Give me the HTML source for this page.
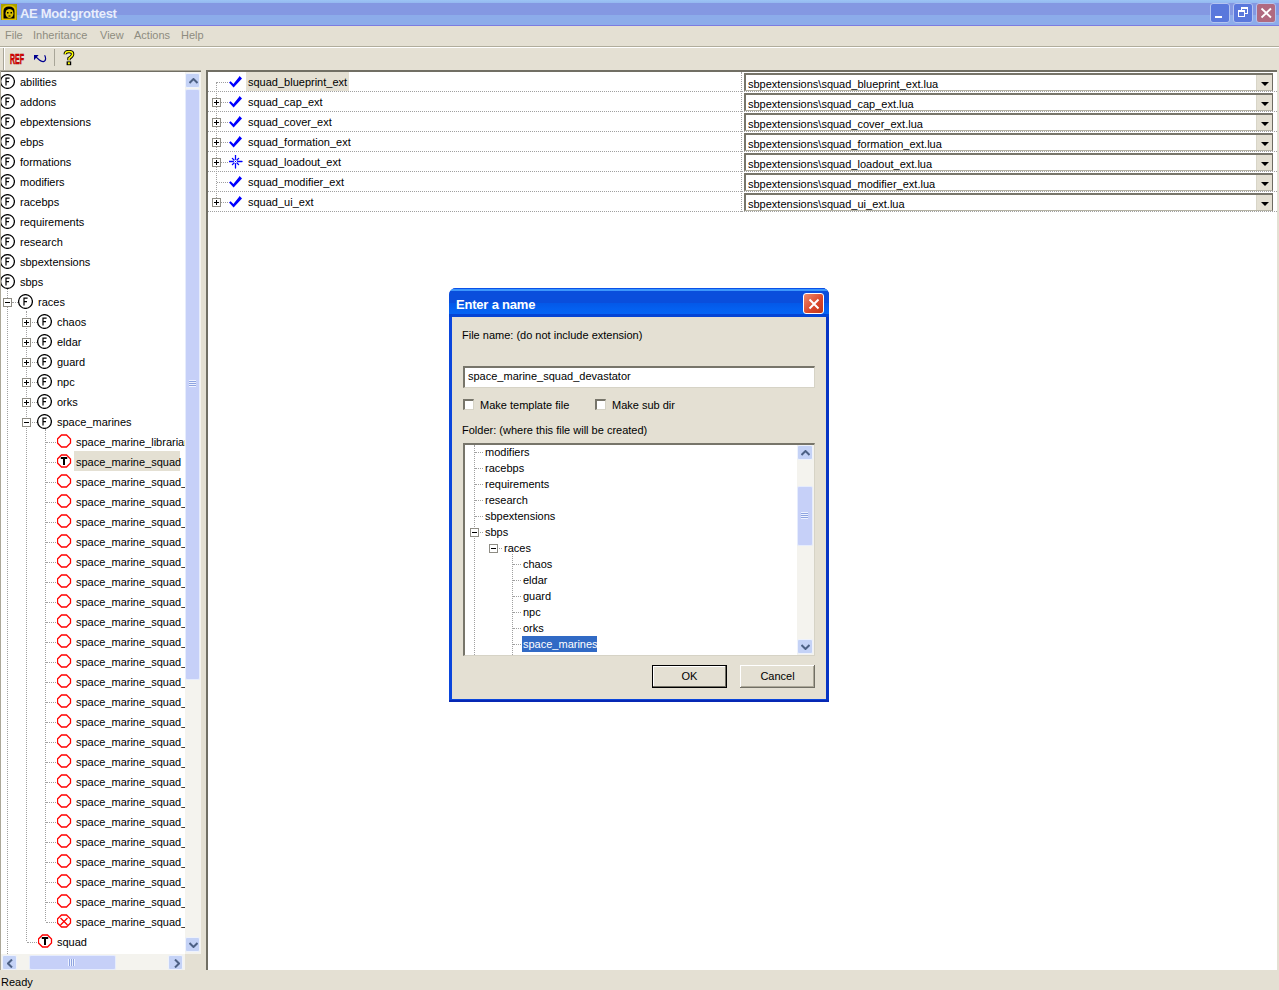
<!DOCTYPE html><html><head><meta charset="utf-8"><style>
*{margin:0;padding:0;box-sizing:border-box}
html,body{width:1279px;height:990px;overflow:hidden;background:#E4E0D3;font-family:"Liberation Sans", sans-serif;font-size:11px;color:#000}
.a{position:absolute}
.t{position:absolute;white-space:nowrap;line-height:13px;font-size:11px}
.dv{position:absolute;border-left:1px dotted #a0a0a0;width:0}
.dh{position:absolute;border-top:1px dotted #a0a0a0;height:0}
.pb{position:absolute;width:9px;height:9px;border:1px solid #8e8c84;background:#fff}
.pb:before{content:"";position:absolute;left:1px;top:3px;width:5px;height:1px;background:#000}
.pb.p:after{content:"";position:absolute;left:3px;top:1px;width:1px;height:5px;background:#000}
.fi{position:absolute;width:15px;height:15px;border:1px solid #000;border-radius:50%;background:#fff;font-size:10px;line-height:13px;text-align:center;}
.cmb{position:absolute;left:744px;width:529px;height:18px;background:#fff;border-top:2px solid #77756a;border-left:2px solid #77756a;border-right:1px solid #6e6c62;border-bottom:1px solid #b4b2a4}
.cmb .bt{position:absolute;right:0;top:0;width:16px;height:15px;background:#E4E0D3;border-left:1px solid #d8d5c8}
.cmb .bt:after{content:"";position:absolute;left:4px;top:7px;border-left:4px solid transparent;border-right:4px solid transparent;border-top:4px solid #000}
</style></head><body>
<div class="a" style="left:0;top:0;width:1279px;height:26px;background:linear-gradient(#9cc4f4 0px,#94b8f0 3px,#8498e2 3px,#8498e2 15px,#8cacea 15px,#8cacea 25px,#7c7ce0 25px)"></div>
<svg class="a" style="left:1px;top:4px" width="16" height="16"><rect x="0" y="0" width="16" height="16" fill="#a8a000"/><path d="M1 16 V6 Q1 1 8 1 Q15 1 15 6 V16 Z" fill="#e0c000"/><path d="M2.5 14.5 V7 Q2.5 2.5 8 2.5 Q13.5 2.5 13.5 7 V14.5 Z" fill="#000"/><ellipse cx="8.5" cy="9.5" rx="4" ry="4.5" fill="#d8c000"/><rect x="6" y="8" width="1.5" height="1.5" fill="#000"/><rect x="9.5" y="8" width="1.5" height="1.5" fill="#000"/><rect x="7.5" y="11.5" width="2" height="1" fill="#000"/></svg>
<div class="t" style="left:20px;top:6px;font-size:13px;line-height:16px;font-weight:bold;color:#e8eefc;letter-spacing:-0.3px">AE Mod:grottest</div>
<div class="a" style="left:1210px;top:3px;width:20px;height:20px;border:1px solid #b4c4f0;border-radius:3px;background:#5a78dc"><div class="a" style="left:4px;top:12px;width:7px;height:2px;background:#fff"></div></div>
<div class="a" style="left:1233px;top:3px;width:20px;height:20px;border:1px solid #b4c4f0;border-radius:3px;background:#5a78dc"><div class="a" style="left:7px;top:3px;width:7px;height:7px;border:1px solid #fff;border-top-width:2px"></div><div class="a" style="left:4px;top:6px;width:7px;height:7px;border:1px solid #fff;border-top-width:2px;background:#5a78dc"></div></div>
<div class="a" style="left:1256px;top:3px;width:20px;height:20px;border:1px solid #b4c4f0;border-radius:3px;background:#b06a80"><svg class="a" style="left:3px;top:3px" width="13" height="12"><path d="M1.5 1.5L11 10.5M11 1.5L1.5 10.5" stroke="#fff" stroke-width="1.8"/></svg></div>
<div class="t" style="left:5px;top:29px;color:#8e8c80">File</div>
<div class="t" style="left:33px;top:29px;color:#8e8c80">Inheritance</div>
<div class="t" style="left:100px;top:29px;color:#8e8c80">View</div>
<div class="t" style="left:134px;top:29px;color:#8e8c80">Actions</div>
<div class="t" style="left:181px;top:29px;color:#8e8c80">Help</div>
<div class="a" style="left:0;top:46px;width:1279px;height:1px;background:#b0ad9c"></div>
<div class="a" style="left:0;top:47px;width:1279px;height:1px;background:#fff"></div>
<div class="a" style="left:3px;top:48px;width:1px;height:22px;background:#a8a598"></div>
<div class="a" style="left:4px;top:48px;width:1px;height:22px;background:#fff"></div>
<svg class="a" style="left:9px;top:52px" width="17" height="14"><text x="1" y="11.9" font-family="Liberation Sans" font-weight="bold" font-size="14.5" fill="#f00000" stroke="#a00000" stroke-width="0.6" textLength="14" lengthAdjust="spacingAndGlyphs">REF</text></svg>
<svg class="a" style="left:33px;top:54px" width="14" height="10"><path d="M1 1 H5.6 L1 6.2 Z" fill="#000090"/><path d="M2.6 2.6 L6.4 6 Q8.4 7.8 10.4 7.6 Q12.6 7.2 12.6 4.8 Q12.6 2.8 11.6 1.2" stroke="#000090" stroke-width="1.2" fill="none"/></svg>
<div class="a" style="left:54px;top:49px;width:1px;height:17px;background:#a8a598"></div>
<svg class="a" style="left:63px;top:50px" width="12" height="16"><path d="M2.2 4.2 Q2.2 1.6 6 1.6 Q9.6 1.6 9.6 4.2 Q9.6 6 6 8.4 V10.2" stroke="#000" stroke-width="3.4" fill="none"/><rect x="3.6" y="11.4" width="4.6" height="3.8" fill="#000"/><path d="M2.2 4.2 Q2.2 1.6 6 1.6 Q9.6 1.6 9.6 4.2 Q9.6 6 6 8.4 V10.2" stroke="#ffff00" stroke-width="1.5" fill="none"/><rect x="4.9" y="12.3" width="2" height="2" fill="#ffff00"/></svg>
<div class="a" style="left:0;top:70px;width:201px;height:900px;background:#fff;border-top:1px solid #aca899;border-left:1px solid #aca899;overflow:hidden">
<div class="a" style="left:-1px;top:0px;width:201px;height:1px;background:#716f64"></div>
<div class="a" style="left:-1px;top:0px;width:1px;height:900px;background:#716f64"></div>
</div>
<div class="a" style="left:1px;top:72px;width:184px;height:882px;overflow:hidden">
<div class="dv" style="left:6px;top:217px;height:681px"></div>
<svg class="a" style="left:-1px;top:2px" width="15" height="15"><circle cx="7.5" cy="7.5" r="6.9" fill="#fff" stroke="#000" stroke-width="1.25"/><path d="M6 11.5 V4.2 H9.6 M6 7.6 H9" stroke="#000" stroke-width="1.2" fill="none"/></svg>
<div class="t" style="left:19px;top:4px;">abilities</div>
<svg class="a" style="left:-1px;top:22px" width="15" height="15"><circle cx="7.5" cy="7.5" r="6.9" fill="#fff" stroke="#000" stroke-width="1.25"/><path d="M6 11.5 V4.2 H9.6 M6 7.6 H9" stroke="#000" stroke-width="1.2" fill="none"/></svg>
<div class="t" style="left:19px;top:24px;">addons</div>
<svg class="a" style="left:-1px;top:42px" width="15" height="15"><circle cx="7.5" cy="7.5" r="6.9" fill="#fff" stroke="#000" stroke-width="1.25"/><path d="M6 11.5 V4.2 H9.6 M6 7.6 H9" stroke="#000" stroke-width="1.2" fill="none"/></svg>
<div class="t" style="left:19px;top:44px;">ebpextensions</div>
<svg class="a" style="left:-1px;top:62px" width="15" height="15"><circle cx="7.5" cy="7.5" r="6.9" fill="#fff" stroke="#000" stroke-width="1.25"/><path d="M6 11.5 V4.2 H9.6 M6 7.6 H9" stroke="#000" stroke-width="1.2" fill="none"/></svg>
<div class="t" style="left:19px;top:64px;">ebps</div>
<svg class="a" style="left:-1px;top:82px" width="15" height="15"><circle cx="7.5" cy="7.5" r="6.9" fill="#fff" stroke="#000" stroke-width="1.25"/><path d="M6 11.5 V4.2 H9.6 M6 7.6 H9" stroke="#000" stroke-width="1.2" fill="none"/></svg>
<div class="t" style="left:19px;top:84px;">formations</div>
<svg class="a" style="left:-1px;top:102px" width="15" height="15"><circle cx="7.5" cy="7.5" r="6.9" fill="#fff" stroke="#000" stroke-width="1.25"/><path d="M6 11.5 V4.2 H9.6 M6 7.6 H9" stroke="#000" stroke-width="1.2" fill="none"/></svg>
<div class="t" style="left:19px;top:104px;">modifiers</div>
<svg class="a" style="left:-1px;top:122px" width="15" height="15"><circle cx="7.5" cy="7.5" r="6.9" fill="#fff" stroke="#000" stroke-width="1.25"/><path d="M6 11.5 V4.2 H9.6 M6 7.6 H9" stroke="#000" stroke-width="1.2" fill="none"/></svg>
<div class="t" style="left:19px;top:124px;">racebps</div>
<svg class="a" style="left:-1px;top:142px" width="15" height="15"><circle cx="7.5" cy="7.5" r="6.9" fill="#fff" stroke="#000" stroke-width="1.25"/><path d="M6 11.5 V4.2 H9.6 M6 7.6 H9" stroke="#000" stroke-width="1.2" fill="none"/></svg>
<div class="t" style="left:19px;top:144px;">requirements</div>
<svg class="a" style="left:-1px;top:162px" width="15" height="15"><circle cx="7.5" cy="7.5" r="6.9" fill="#fff" stroke="#000" stroke-width="1.25"/><path d="M6 11.5 V4.2 H9.6 M6 7.6 H9" stroke="#000" stroke-width="1.2" fill="none"/></svg>
<div class="t" style="left:19px;top:164px;">research</div>
<svg class="a" style="left:-1px;top:182px" width="15" height="15"><circle cx="7.5" cy="7.5" r="6.9" fill="#fff" stroke="#000" stroke-width="1.25"/><path d="M6 11.5 V4.2 H9.6 M6 7.6 H9" stroke="#000" stroke-width="1.2" fill="none"/></svg>
<div class="t" style="left:19px;top:184px;">sbpextensions</div>
<svg class="a" style="left:-1px;top:202px" width="15" height="15"><circle cx="7.5" cy="7.5" r="6.9" fill="#fff" stroke="#000" stroke-width="1.25"/><path d="M6 11.5 V4.2 H9.6 M6 7.6 H9" stroke="#000" stroke-width="1.2" fill="none"/></svg>
<div class="t" style="left:19px;top:204px;">sbps</div>
<div class="dv" style="left:25px;top:239px;height:630px"></div>
<div class="dh" style="left:11px;top:230px;width:6px"></div>
<div class="pb" style="left:2px;top:226px"></div>
<svg class="a" style="left:17px;top:222px" width="15" height="15"><circle cx="7.5" cy="7.5" r="6.9" fill="#fff" stroke="#000" stroke-width="1.25"/><path d="M6 11.5 V4.2 H9.6 M6 7.6 H9" stroke="#000" stroke-width="1.2" fill="none"/></svg>
<div class="t" style="left:37px;top:224px;">races</div>
<div class="dh" style="left:29px;top:250px;width:7px"></div>
<div class="pb p" style="left:21px;top:246px"></div>
<svg class="a" style="left:36px;top:242px" width="15" height="15"><circle cx="7.5" cy="7.5" r="6.9" fill="#fff" stroke="#000" stroke-width="1.25"/><path d="M6 11.5 V4.2 H9.6 M6 7.6 H9" stroke="#000" stroke-width="1.2" fill="none"/></svg>
<div class="t" style="left:56px;top:244px;">chaos</div>
<div class="dh" style="left:29px;top:270px;width:7px"></div>
<div class="pb p" style="left:21px;top:266px"></div>
<svg class="a" style="left:36px;top:262px" width="15" height="15"><circle cx="7.5" cy="7.5" r="6.9" fill="#fff" stroke="#000" stroke-width="1.25"/><path d="M6 11.5 V4.2 H9.6 M6 7.6 H9" stroke="#000" stroke-width="1.2" fill="none"/></svg>
<div class="t" style="left:56px;top:264px;">eldar</div>
<div class="dh" style="left:29px;top:290px;width:7px"></div>
<div class="pb p" style="left:21px;top:286px"></div>
<svg class="a" style="left:36px;top:282px" width="15" height="15"><circle cx="7.5" cy="7.5" r="6.9" fill="#fff" stroke="#000" stroke-width="1.25"/><path d="M6 11.5 V4.2 H9.6 M6 7.6 H9" stroke="#000" stroke-width="1.2" fill="none"/></svg>
<div class="t" style="left:56px;top:284px;">guard</div>
<div class="dh" style="left:29px;top:310px;width:7px"></div>
<div class="pb p" style="left:21px;top:306px"></div>
<svg class="a" style="left:36px;top:302px" width="15" height="15"><circle cx="7.5" cy="7.5" r="6.9" fill="#fff" stroke="#000" stroke-width="1.25"/><path d="M6 11.5 V4.2 H9.6 M6 7.6 H9" stroke="#000" stroke-width="1.2" fill="none"/></svg>
<div class="t" style="left:56px;top:304px;">npc</div>
<div class="dh" style="left:29px;top:330px;width:7px"></div>
<div class="pb p" style="left:21px;top:326px"></div>
<svg class="a" style="left:36px;top:322px" width="15" height="15"><circle cx="7.5" cy="7.5" r="6.9" fill="#fff" stroke="#000" stroke-width="1.25"/><path d="M6 11.5 V4.2 H9.6 M6 7.6 H9" stroke="#000" stroke-width="1.2" fill="none"/></svg>
<div class="t" style="left:56px;top:324px;">orks</div>
<div class="dh" style="left:29px;top:350px;width:7px"></div>
<div class="pb" style="left:21px;top:346px"></div>
<svg class="a" style="left:36px;top:342px" width="15" height="15"><circle cx="7.5" cy="7.5" r="6.9" fill="#fff" stroke="#000" stroke-width="1.25"/><path d="M6 11.5 V4.2 H9.6 M6 7.6 H9" stroke="#000" stroke-width="1.2" fill="none"/></svg>
<div class="t" style="left:56px;top:344px;">space_marines</div>
<div class="dv" style="left:44px;top:357px;height:492px"></div>
<div class="a" style="left:73px;top:379px;width:106px;height:20px;background:#E4E0D3"></div>
<div class="dh" style="left:45px;top:370px;width:10px"></div>
<svg class="a" style="left:56px;top:362px" width="15" height="15"><path d="M4.5 1 H9.5 L13.5 5 V9 L9.5 13 H4.5 L0.5 9 V5 Z" fill="#fff" stroke="#ff0000" stroke-width="1.3"/></svg>
<div class="t" style="left:75px;top:364px;">space_marine_librarian</div>
<div class="dh" style="left:45px;top:390px;width:10px"></div>
<svg class="a" style="left:56px;top:382px" width="15" height="15"><path d="M4.5 1 H9.5 L13.5 5 V9 L9.5 13 H4.5 L0.5 9 V5 Z" fill="#fff" stroke="#ff0000" stroke-width="1.3"/><path d="M3.8 3 H10.2 V5 H8 V11 H6 V5 H3.8 Z" fill="#000"/></svg>
<div class="t" style="left:75px;top:384px;">space_marine_squad</div>
<div class="dh" style="left:45px;top:410px;width:10px"></div>
<svg class="a" style="left:56px;top:402px" width="15" height="15"><path d="M4.5 1 H9.5 L13.5 5 V9 L9.5 13 H4.5 L0.5 9 V5 Z" fill="#fff" stroke="#ff0000" stroke-width="1.3"/></svg>
<div class="t" style="left:75px;top:404px;">space_marine_squad_</div>
<div class="dh" style="left:45px;top:430px;width:10px"></div>
<svg class="a" style="left:56px;top:422px" width="15" height="15"><path d="M4.5 1 H9.5 L13.5 5 V9 L9.5 13 H4.5 L0.5 9 V5 Z" fill="#fff" stroke="#ff0000" stroke-width="1.3"/></svg>
<div class="t" style="left:75px;top:424px;">space_marine_squad_</div>
<div class="dh" style="left:45px;top:450px;width:10px"></div>
<svg class="a" style="left:56px;top:442px" width="15" height="15"><path d="M4.5 1 H9.5 L13.5 5 V9 L9.5 13 H4.5 L0.5 9 V5 Z" fill="#fff" stroke="#ff0000" stroke-width="1.3"/></svg>
<div class="t" style="left:75px;top:444px;">space_marine_squad_</div>
<div class="dh" style="left:45px;top:470px;width:10px"></div>
<svg class="a" style="left:56px;top:462px" width="15" height="15"><path d="M4.5 1 H9.5 L13.5 5 V9 L9.5 13 H4.5 L0.5 9 V5 Z" fill="#fff" stroke="#ff0000" stroke-width="1.3"/></svg>
<div class="t" style="left:75px;top:464px;">space_marine_squad_</div>
<div class="dh" style="left:45px;top:490px;width:10px"></div>
<svg class="a" style="left:56px;top:482px" width="15" height="15"><path d="M4.5 1 H9.5 L13.5 5 V9 L9.5 13 H4.5 L0.5 9 V5 Z" fill="#fff" stroke="#ff0000" stroke-width="1.3"/></svg>
<div class="t" style="left:75px;top:484px;">space_marine_squad_</div>
<div class="dh" style="left:45px;top:510px;width:10px"></div>
<svg class="a" style="left:56px;top:502px" width="15" height="15"><path d="M4.5 1 H9.5 L13.5 5 V9 L9.5 13 H4.5 L0.5 9 V5 Z" fill="#fff" stroke="#ff0000" stroke-width="1.3"/></svg>
<div class="t" style="left:75px;top:504px;">space_marine_squad_</div>
<div class="dh" style="left:45px;top:530px;width:10px"></div>
<svg class="a" style="left:56px;top:522px" width="15" height="15"><path d="M4.5 1 H9.5 L13.5 5 V9 L9.5 13 H4.5 L0.5 9 V5 Z" fill="#fff" stroke="#ff0000" stroke-width="1.3"/></svg>
<div class="t" style="left:75px;top:524px;">space_marine_squad_</div>
<div class="dh" style="left:45px;top:550px;width:10px"></div>
<svg class="a" style="left:56px;top:542px" width="15" height="15"><path d="M4.5 1 H9.5 L13.5 5 V9 L9.5 13 H4.5 L0.5 9 V5 Z" fill="#fff" stroke="#ff0000" stroke-width="1.3"/></svg>
<div class="t" style="left:75px;top:544px;">space_marine_squad_</div>
<div class="dh" style="left:45px;top:570px;width:10px"></div>
<svg class="a" style="left:56px;top:562px" width="15" height="15"><path d="M4.5 1 H9.5 L13.5 5 V9 L9.5 13 H4.5 L0.5 9 V5 Z" fill="#fff" stroke="#ff0000" stroke-width="1.3"/></svg>
<div class="t" style="left:75px;top:564px;">space_marine_squad_</div>
<div class="dh" style="left:45px;top:590px;width:10px"></div>
<svg class="a" style="left:56px;top:582px" width="15" height="15"><path d="M4.5 1 H9.5 L13.5 5 V9 L9.5 13 H4.5 L0.5 9 V5 Z" fill="#fff" stroke="#ff0000" stroke-width="1.3"/></svg>
<div class="t" style="left:75px;top:584px;">space_marine_squad_</div>
<div class="dh" style="left:45px;top:610px;width:10px"></div>
<svg class="a" style="left:56px;top:602px" width="15" height="15"><path d="M4.5 1 H9.5 L13.5 5 V9 L9.5 13 H4.5 L0.5 9 V5 Z" fill="#fff" stroke="#ff0000" stroke-width="1.3"/></svg>
<div class="t" style="left:75px;top:604px;">space_marine_squad_</div>
<div class="dh" style="left:45px;top:630px;width:10px"></div>
<svg class="a" style="left:56px;top:622px" width="15" height="15"><path d="M4.5 1 H9.5 L13.5 5 V9 L9.5 13 H4.5 L0.5 9 V5 Z" fill="#fff" stroke="#ff0000" stroke-width="1.3"/></svg>
<div class="t" style="left:75px;top:624px;">space_marine_squad_</div>
<div class="dh" style="left:45px;top:650px;width:10px"></div>
<svg class="a" style="left:56px;top:642px" width="15" height="15"><path d="M4.5 1 H9.5 L13.5 5 V9 L9.5 13 H4.5 L0.5 9 V5 Z" fill="#fff" stroke="#ff0000" stroke-width="1.3"/></svg>
<div class="t" style="left:75px;top:644px;">space_marine_squad_</div>
<div class="dh" style="left:45px;top:670px;width:10px"></div>
<svg class="a" style="left:56px;top:662px" width="15" height="15"><path d="M4.5 1 H9.5 L13.5 5 V9 L9.5 13 H4.5 L0.5 9 V5 Z" fill="#fff" stroke="#ff0000" stroke-width="1.3"/></svg>
<div class="t" style="left:75px;top:664px;">space_marine_squad_</div>
<div class="dh" style="left:45px;top:690px;width:10px"></div>
<svg class="a" style="left:56px;top:682px" width="15" height="15"><path d="M4.5 1 H9.5 L13.5 5 V9 L9.5 13 H4.5 L0.5 9 V5 Z" fill="#fff" stroke="#ff0000" stroke-width="1.3"/></svg>
<div class="t" style="left:75px;top:684px;">space_marine_squad_</div>
<div class="dh" style="left:45px;top:710px;width:10px"></div>
<svg class="a" style="left:56px;top:702px" width="15" height="15"><path d="M4.5 1 H9.5 L13.5 5 V9 L9.5 13 H4.5 L0.5 9 V5 Z" fill="#fff" stroke="#ff0000" stroke-width="1.3"/></svg>
<div class="t" style="left:75px;top:704px;">space_marine_squad_</div>
<div class="dh" style="left:45px;top:730px;width:10px"></div>
<svg class="a" style="left:56px;top:722px" width="15" height="15"><path d="M4.5 1 H9.5 L13.5 5 V9 L9.5 13 H4.5 L0.5 9 V5 Z" fill="#fff" stroke="#ff0000" stroke-width="1.3"/></svg>
<div class="t" style="left:75px;top:724px;">space_marine_squad_</div>
<div class="dh" style="left:45px;top:750px;width:10px"></div>
<svg class="a" style="left:56px;top:742px" width="15" height="15"><path d="M4.5 1 H9.5 L13.5 5 V9 L9.5 13 H4.5 L0.5 9 V5 Z" fill="#fff" stroke="#ff0000" stroke-width="1.3"/></svg>
<div class="t" style="left:75px;top:744px;">space_marine_squad_</div>
<div class="dh" style="left:45px;top:770px;width:10px"></div>
<svg class="a" style="left:56px;top:762px" width="15" height="15"><path d="M4.5 1 H9.5 L13.5 5 V9 L9.5 13 H4.5 L0.5 9 V5 Z" fill="#fff" stroke="#ff0000" stroke-width="1.3"/></svg>
<div class="t" style="left:75px;top:764px;">space_marine_squad_</div>
<div class="dh" style="left:45px;top:790px;width:10px"></div>
<svg class="a" style="left:56px;top:782px" width="15" height="15"><path d="M4.5 1 H9.5 L13.5 5 V9 L9.5 13 H4.5 L0.5 9 V5 Z" fill="#fff" stroke="#ff0000" stroke-width="1.3"/></svg>
<div class="t" style="left:75px;top:784px;">space_marine_squad_</div>
<div class="dh" style="left:45px;top:810px;width:10px"></div>
<svg class="a" style="left:56px;top:802px" width="15" height="15"><path d="M4.5 1 H9.5 L13.5 5 V9 L9.5 13 H4.5 L0.5 9 V5 Z" fill="#fff" stroke="#ff0000" stroke-width="1.3"/></svg>
<div class="t" style="left:75px;top:804px;">space_marine_squad_</div>
<div class="dh" style="left:45px;top:830px;width:10px"></div>
<svg class="a" style="left:56px;top:822px" width="15" height="15"><path d="M4.5 1 H9.5 L13.5 5 V9 L9.5 13 H4.5 L0.5 9 V5 Z" fill="#fff" stroke="#ff0000" stroke-width="1.3"/></svg>
<div class="t" style="left:75px;top:824px;">space_marine_squad_</div>
<div class="dh" style="left:45px;top:850px;width:10px"></div>
<svg class="a" style="left:56px;top:842px" width="15" height="15"><path d="M4.5 1 H9.5 L13.5 5 V9 L9.5 13 H4.5 L0.5 9 V5 Z" fill="#fff" stroke="#ff0000" stroke-width="1.3"/><path d="M3.5 4 L10.5 11 M10.5 4 L3.5 11" stroke="#ff0000" stroke-width="1.3"/></svg>
<div class="t" style="left:75px;top:844px;">space_marine_squad_</div>
<div class="dh" style="left:26px;top:870px;width:10px"></div>
<svg class="a" style="left:37px;top:862px" width="15" height="15"><path d="M4.5 1 H9.5 L13.5 5 V9 L9.5 13 H4.5 L0.5 9 V5 Z" fill="#fff" stroke="#ff0000" stroke-width="1.3"/><path d="M3.8 3 H10.2 V5 H8 V11 H6 V5 H3.8 Z" fill="#000"/></svg>
<div class="t" style="left:56px;top:864px;">squad</div>
</div>
<div class="a" style="left:185px;top:72px;width:16px;height:882px;background:#f4f3ee"></div>
<div class="a" style="left:185px;top:73px;width:15px;height:15px;background:#c4d2f6;border:1px solid #eef2fc;border-radius:2px"><svg class="a" style="left:3px;top:4px" width="9" height="6"><path d="M0.5 5 L4.5 1 L8.5 5" stroke="#4d6185" stroke-width="2" fill="none"/></svg></div>
<div class="a" style="left:185px;top:89px;width:15px;height:591px;background:#c6d0f8;border:1px solid #e6ecfc;border-radius:2px"></div>
<div class="a" style="left:189px;top:380px;width:7px;height:7px;background:repeating-linear-gradient(#eef2ff 0 1px,#8ea4e0 1px 2px)"></div>
<div class="a" style="left:185px;top:937px;width:15px;height:15px;background:#c4d2f6;border:1px solid #eef2fc;border-radius:2px"><svg class="a" style="left:3px;top:4px" width="9" height="6"><path d="M0.5 1 L4.5 5 L8.5 1" stroke="#4d6185" stroke-width="2" fill="none"/></svg></div>
<div class="a" style="left:1px;top:954px;width:184px;height:16px;background:#f4f3ee"></div>
<div class="a" style="left:2px;top:955px;width:15px;height:15px;background:#c4d2f6;border:1px solid #eef2fc;border-radius:2px"><svg class="a" style="left:4px;top:3px" width="6" height="9"><path d="M5 0.5 L1 4.5 L5 8.5" stroke="#4d6185" stroke-width="2" fill="none"/></svg></div>
<div class="a" style="left:29px;top:955px;width:87px;height:15px;background:#c6d0f8;border:1px solid #e6ecfc;border-radius:2px"></div>
<div class="a" style="left:68px;top:959px;width:7px;height:7px;background:repeating-linear-gradient(90deg,#eef2ff 0 1px,#8ea4e0 1px 2px)"></div>
<div class="a" style="left:168px;top:955px;width:15px;height:15px;background:#c4d2f6;border:1px solid #eef2fc;border-radius:2px"><svg class="a" style="left:5px;top:3px" width="6" height="9"><path d="M1 0.5 L5 4.5 L1 8.5" stroke="#4d6185" stroke-width="2" fill="none"/></svg></div>
<div class="a" style="left:185px;top:954px;width:16px;height:16px;background:#E4E0D3"></div>
<div class="a" style="left:206px;top:70px;width:1071px;height:900px;background:#fff;border-top:2px solid #716f64;border-left:2px solid #716f64"></div>
<div class="a" style="left:246px;top:72px;width:103px;height:19px;background:#E4E0D3"></div>
<div class="dv" style="left:216px;top:82px;height:120px"></div>
<div class="dv" style="left:741px;top:72px;height:140px"></div>
<div class="dh" style="left:208px;top:91px;width:1069px"></div>
<div class="dh" style="left:217px;top:82px;width:11px"></div>
<svg class="a" style="left:228px;top:74px" width="15" height="15"><path d="M1 8.6 L2.6 7.2 L5.4 10 L10.6 3.6 L11.6 2 L14 4.6 L12.6 6 L5.6 13.6 Z" fill="#0000ff"/></svg>
<div class="t" style="left:248px;top:76px">squad_blueprint_ext</div>
<div class="cmb" style="top:73px"><div class="t" style="left:2px;top:3px">sbpextensions\squad_blueprint_ext.lua</div><div class="bt"></div></div>
<div class="dh" style="left:208px;top:111px;width:1069px"></div>
<div class="dh" style="left:217px;top:102px;width:11px"></div>
<div class="pb p" style="left:212px;top:98px"></div>
<svg class="a" style="left:228px;top:94px" width="15" height="15"><path d="M1 8.6 L2.6 7.2 L5.4 10 L10.6 3.6 L11.6 2 L14 4.6 L12.6 6 L5.6 13.6 Z" fill="#0000ff"/></svg>
<div class="t" style="left:248px;top:96px">squad_cap_ext</div>
<div class="cmb" style="top:93px"><div class="t" style="left:2px;top:3px">sbpextensions\squad_cap_ext.lua</div><div class="bt"></div></div>
<div class="dh" style="left:208px;top:131px;width:1069px"></div>
<div class="dh" style="left:217px;top:122px;width:11px"></div>
<div class="pb p" style="left:212px;top:118px"></div>
<svg class="a" style="left:228px;top:114px" width="15" height="15"><path d="M1 8.6 L2.6 7.2 L5.4 10 L10.6 3.6 L11.6 2 L14 4.6 L12.6 6 L5.6 13.6 Z" fill="#0000ff"/></svg>
<div class="t" style="left:248px;top:116px">squad_cover_ext</div>
<div class="cmb" style="top:113px"><div class="t" style="left:2px;top:3px">sbpextensions\squad_cover_ext.lua</div><div class="bt"></div></div>
<div class="dh" style="left:208px;top:151px;width:1069px"></div>
<div class="dh" style="left:217px;top:142px;width:11px"></div>
<div class="pb p" style="left:212px;top:138px"></div>
<svg class="a" style="left:228px;top:134px" width="15" height="15"><path d="M1 8.6 L2.6 7.2 L5.4 10 L10.6 3.6 L11.6 2 L14 4.6 L12.6 6 L5.6 13.6 Z" fill="#0000ff"/></svg>
<div class="t" style="left:248px;top:136px">squad_formation_ext</div>
<div class="cmb" style="top:133px"><div class="t" style="left:2px;top:3px">sbpextensions\squad_formation_ext.lua</div><div class="bt"></div></div>
<div class="dh" style="left:208px;top:171px;width:1069px"></div>
<div class="dh" style="left:217px;top:162px;width:11px"></div>
<div class="pb p" style="left:212px;top:158px"></div>
<svg class="a" style="left:229px;top:155px" width="15" height="15"><path d="M6.5 0 V4.3 M6.5 8.7 V13 M0 6.5 H4.3 M8.7 6.5 H13 M3.4 3.4 L5 5 M9.6 3.4 L8 5 M3.4 9.6 L5 8 M9.6 9.6 L8 8" stroke="#0000ff" stroke-width="1.3" stroke-linecap="round"/><rect x="6" y="6" width="1" height="1" fill="#0000ff"/></svg>
<div class="t" style="left:248px;top:156px">squad_loadout_ext</div>
<div class="cmb" style="top:153px"><div class="t" style="left:2px;top:3px">sbpextensions\squad_loadout_ext.lua</div><div class="bt"></div></div>
<div class="dh" style="left:208px;top:191px;width:1069px"></div>
<div class="dh" style="left:217px;top:182px;width:11px"></div>
<svg class="a" style="left:228px;top:174px" width="15" height="15"><path d="M1 8.6 L2.6 7.2 L5.4 10 L10.6 3.6 L11.6 2 L14 4.6 L12.6 6 L5.6 13.6 Z" fill="#0000ff"/></svg>
<div class="t" style="left:248px;top:176px">squad_modifier_ext</div>
<div class="cmb" style="top:173px"><div class="t" style="left:2px;top:3px">sbpextensions\squad_modifier_ext.lua</div><div class="bt"></div></div>
<div class="dh" style="left:208px;top:211px;width:1069px"></div>
<div class="dh" style="left:217px;top:202px;width:11px"></div>
<div class="pb p" style="left:212px;top:198px"></div>
<svg class="a" style="left:228px;top:194px" width="15" height="15"><path d="M1 8.6 L2.6 7.2 L5.4 10 L10.6 3.6 L11.6 2 L14 4.6 L12.6 6 L5.6 13.6 Z" fill="#0000ff"/></svg>
<div class="t" style="left:248px;top:196px">squad_ui_ext</div>
<div class="cmb" style="top:193px"><div class="t" style="left:2px;top:3px">sbpextensions\squad_ui_ext.lua</div><div class="bt"></div></div>
<div class="t" style="left:1px;top:976px">Ready</div>
<div class="a" style="left:449px;top:288px;width:380px;height:414px;background:#0a46dc;border-radius:7px 7px 0 0;box-shadow:inset 0 -2px #0628b4,inset -3px 0 #0634c4"></div>
<div class="a" style="left:449px;top:288px;width:380px;height:29px;border-radius:7px 7px 0 0;background:linear-gradient(#0a50e8 0px,#0a50e8 1px,#3c96fc 1px,#3c96fc 3px,#0a4edc 3px,#0a4edc 15px,#0458e8 15px,#0460f0 21px,#0464f4 26px,#0444d4 26px,#0444d4 29px)"></div>
<div class="t" style="left:456px;top:297px;font-size:13px;line-height:16px;font-weight:bold;color:#fff;letter-spacing:-0.2px">Enter a name</div>
<div class="a" style="left:803px;top:293px;width:21px;height:21px;border:1px solid #fff;border-radius:3px;background:linear-gradient(135deg,#f08a6a,#d8452a 60%,#c03818)"><svg class="a" style="left:4px;top:4px" width="12" height="12"><path d="M1.5 1.5L10.5 10.5M10.5 1.5L1.5 10.5" stroke="#fff" stroke-width="2"/></svg></div>
<div class="a" style="left:452px;top:317px;width:374px;height:382px;background:#E4E0D3"></div>
<div class="t" style="left:462px;top:329px;">File name: (do not include extension)</div>
<div class="a" style="left:463px;top:366px;width:352px;height:22px;background:#fff;border-top:2px solid #77756a;border-left:2px solid #77756a;border-bottom:1px solid #d6d3c6;border-right:1px solid #d6d3c6"></div>
<div class="t" style="left:468px;top:370px;">space_marine_squad_devastator</div>
<div class="a" style="left:463px;top:399px;width:11px;height:11px;background:#fff;border-top:2px solid #77756a;border-left:2px solid #77756a;border-bottom:1px solid #d6d3c6;border-right:1px solid #d6d3c6"></div>
<div class="t" style="left:480px;top:399px;">Make template file</div>
<div class="a" style="left:595px;top:399px;width:11px;height:11px;background:#fff;border-top:2px solid #77756a;border-left:2px solid #77756a;border-bottom:1px solid #d6d3c6;border-right:1px solid #d6d3c6"></div>
<div class="t" style="left:612px;top:399px;">Make sub dir</div>
<div class="t" style="left:462px;top:424px;">Folder: (where this file will be created)</div>
<div class="a" style="left:463px;top:443px;width:352px;height:213px;background:#fff;border-top:2px solid #77756a;border-left:2px solid #77756a;border-bottom:1px solid #d6d3c6;border-right:1px solid #d6d3c6"></div>
<div class="dv" style="left:474px;top:445px;height:210px"></div>
<div class="dv" style="left:512px;top:554px;height:101px"></div>
<div class="dh" style="left:475px;top:452px;width:8px"></div>
<div class="t" style="left:485px;top:446px;">modifiers</div>
<div class="dh" style="left:475px;top:468px;width:8px"></div>
<div class="t" style="left:485px;top:462px;">racebps</div>
<div class="dh" style="left:475px;top:484px;width:8px"></div>
<div class="t" style="left:485px;top:478px;">requirements</div>
<div class="dh" style="left:475px;top:500px;width:8px"></div>
<div class="t" style="left:485px;top:494px;">research</div>
<div class="dh" style="left:475px;top:516px;width:8px"></div>
<div class="t" style="left:485px;top:510px;">sbpextensions</div>
<div class="dh" style="left:475px;top:532px;width:8px"></div>
<div class="t" style="left:485px;top:526px;">sbps</div>
<div class="pb" style="left:470px;top:528px"></div>
<div class="dh" style="left:494px;top:548px;width:8px"></div>
<div class="pb" style="left:489px;top:544px"></div>
<div class="t" style="left:504px;top:542px;">races</div>
<div class="dh" style="left:513px;top:564px;width:8px"></div>
<div class="t" style="left:523px;top:558px;">chaos</div>
<div class="dh" style="left:513px;top:580px;width:8px"></div>
<div class="t" style="left:523px;top:574px;">eldar</div>
<div class="dh" style="left:513px;top:596px;width:8px"></div>
<div class="t" style="left:523px;top:590px;">guard</div>
<div class="dh" style="left:513px;top:612px;width:8px"></div>
<div class="t" style="left:523px;top:606px;">npc</div>
<div class="dh" style="left:513px;top:628px;width:8px"></div>
<div class="t" style="left:523px;top:622px;">orks</div>
<div class="dh" style="left:513px;top:644px;width:8px"></div>
<div class="a" style="left:522px;top:636px;width:75px;height:16px;background:#316ac5"></div>
<div class="t" style="left:523px;top:638px;color:#fff">space_marines</div>
<div class="a" style="left:797px;top:445px;width:17px;height:210px;background:#f4f3ee"></div>
<div class="a" style="left:797px;top:445px;width:16px;height:15px;background:#c4d2f6;border:1px solid #eef2fc;border-radius:2px"><svg class="a" style="left:3px;top:4px" width="9" height="6"><path d="M0.5 5 L4.5 1 L8.5 5" stroke="#4d6185" stroke-width="2" fill="none"/></svg></div>
<div class="a" style="left:797px;top:486px;width:16px;height:60px;background:#c6d0f8;border:1px solid #e6ecfc;border-radius:2px"></div>
<div class="a" style="left:801px;top:512px;width:7px;height:7px;background:repeating-linear-gradient(#eef2ff 0 1px,#8ea4e0 1px 2px)"></div>
<div class="a" style="left:797px;top:639px;width:16px;height:15px;background:#c4d2f6;border:1px solid #eef2fc;border-radius:2px"><svg class="a" style="left:3px;top:4px" width="9" height="6"><path d="M0.5 1 L4.5 5 L8.5 1" stroke="#4d6185" stroke-width="2" fill="none"/></svg></div>
<div class="a" style="left:652px;top:665px;width:75px;height:23px;border:1px solid #000;background:#E4E0D3;box-shadow:inset -1px -1px #716f64,inset 1px 1px #fff"></div>
<div class="t" style="left:652px;top:670px;width:75px;text-align:center">OK</div>
<div class="a" style="left:740px;top:665px;width:75px;height:23px;background:#E4E0D3;box-shadow:inset -1px -1px #716f64,inset 1px 1px #fff,inset -2px -2px #aca899"></div>
<div class="t" style="left:740px;top:670px;width:75px;text-align:center">Cancel</div>
</body></html>
